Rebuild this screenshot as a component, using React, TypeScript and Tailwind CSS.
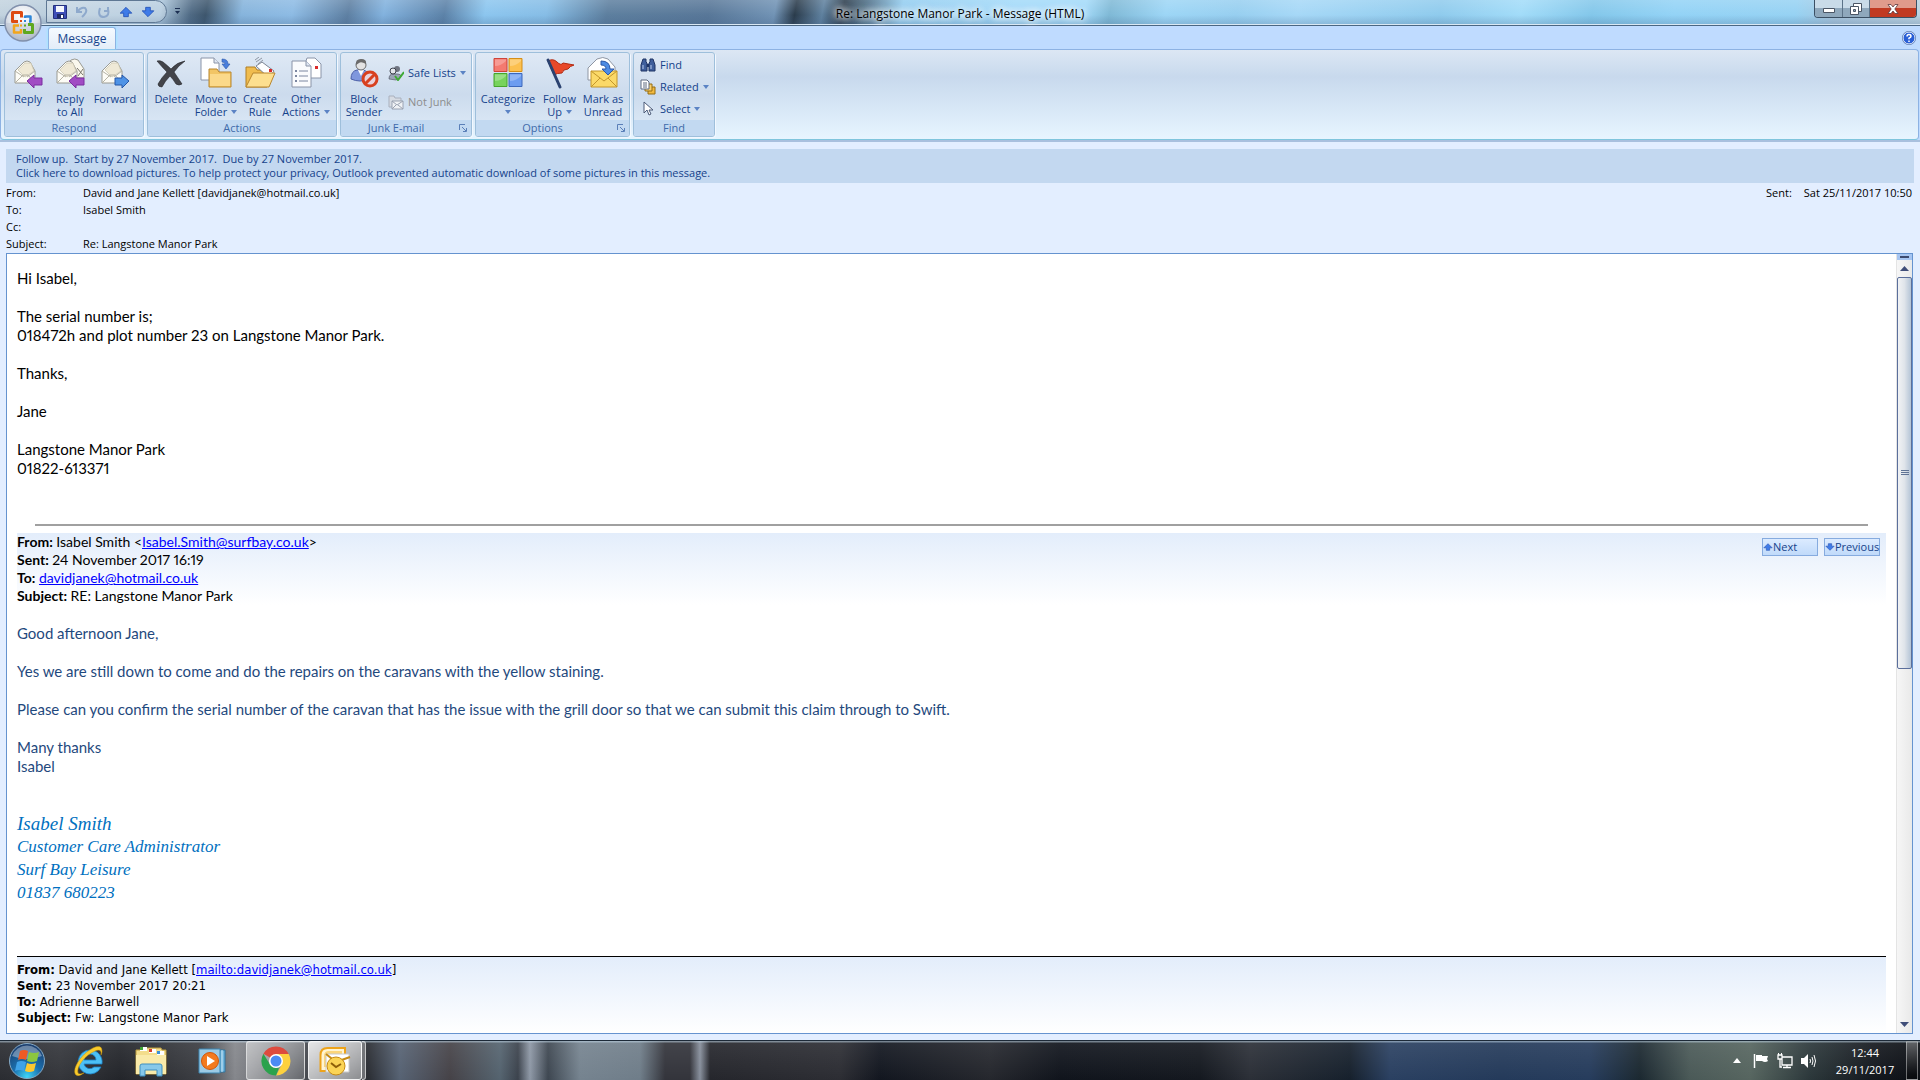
import type { ReactNode } from "react";

const Caret = () => (
  <svg width="6" height="4" viewBox="0 0 6 4" className="inline-block shrink-0" aria-hidden="true">
    <path d="M0 0h6L3 4z" fill="#5b83c4" />
  </svg>
);

const Envelope = () => (
  <>
    <path d="M3 14 12 5q3-2 6 0l5 9v12H3z" fill="#fdfcf6" stroke="#9a9a92" />
    <path d="M6 13 13 6h6l3 8-9 6z" fill="#efe9d6" stroke="#c9c3ae" strokeWidth=".7" />
    <path d="M3 26 11 18h5l7 8M3 14l9 6M23 14l-8 6" fill="none" stroke="#b5b2a4" />
  </>
);

const PurpleArrow = () => (
  <path d="M15 24 22 18v3h8v7h-8v3z" fill="#a14cc4" stroke="#7b2fa0" />
);

const ReplyIcon = () => (
  <svg width="32" height="32" viewBox="0 0 32 32" aria-hidden="true">
    <Envelope />
    <PurpleArrow />
  </svg>
);

const ReplyAllIcon = () => (
  <svg width="32" height="32" viewBox="0 0 32 32" aria-hidden="true">
    <path d="M11 11 17 3q4-2 7 0l6 9v9H11z" fill="#faf8ee" stroke="#9a9a92" />
    <path d="m23 11 6 7M29 12l-5 7" stroke="#77746a" />
    <Envelope />
    <PurpleArrow />
  </svg>
);

const ForwardIcon = () => (
  <svg width="32" height="32" viewBox="0 0 32 32" aria-hidden="true">
    <Envelope />
    <path d="m30 24-7-6v3h-7v7h7v3z" fill="#4f93e6" stroke="#2457a8" />
  </svg>
);

const DeleteIcon = () => (
  <svg width="32" height="32" viewBox="0 0 32 32" aria-hidden="true">
    <path d="M2 4q3-1 6 1 5 4 8 7Q22 5 30 4q-7 5-11 11 4 6 8 12-3 2-6 0-3-5-6-8-5 5-8 11-4 0-4-3 4-7 9-12Q7 10 2 4z" fill="#43444a" stroke="#24252a" strokeWidth=".6" />
  </svg>
);

const MoveIcon = () => (
  <svg width="32" height="32" viewBox="0 0 32 32" aria-hidden="true">
    <path d="M1 1h13l5 5v17H1z" fill="#fff" stroke="#8a94a8" />
    <path d="M14 1v5h5" fill="#dfe6f2" stroke="#8a94a8" />
    <path d="M9 12h8l2 3h12v15H9z" fill="#f2c565" stroke="#b8862f" />
    <path d="M10 17h20v12H10z" fill="#fbd98a" />
    <path d="M22 2q6 0 6 5h2l-4 5-4-5h3q0-2-3-2z" fill="#4a7fdc" stroke="#2b57a8" strokeWidth=".6" />
  </svg>
);

const RuleIcon = () => (
  <svg width="32" height="32" viewBox="0 0 32 32" aria-hidden="true">
    <path d="M2 10h9l2 3h10v17H2z" fill="#f0bc4e" stroke="#b07f25" />
    <path d="m12 9 6-4 12 9-5 7z" fill="#fff" stroke="#7d8594" />
    <path d="m11 3 4-3M12 5l6-4M14 7l5-4" stroke="#8f96a3" />
    <path d="M25 12h3v3h-3z" fill="#d92b2b" />
    <path d="M2 30 9 16h22l-6 14z" fill="#fddf8f" stroke="#b8862f" />
  </svg>
);

const OtherIcon = () => (
  <svg width="32" height="32" viewBox="0 0 32 32" aria-hidden="true">
    <path d="M15 7 17 1h8l6 6v14H15z" fill="#fff" stroke="#8a94a8" />
    <path d="M25 9h3v3h-3z" fill="#d92b2b" />
    <path d="M2 4h14l5 5v21H2z" fill="#fafbfd" stroke="#8a94a8" />
    <path d="M16 4v5h5" fill="#dfe6f2" stroke="#8a94a8" />
    <path d="M9 14h9M9 19h9M9 24h9" stroke="#7b86a0" />
    <path d="M5 13h2v2H5zM5 18h2v2H5zM5 23h2v2H5z" fill="#7b86a0" />
  </svg>
);

const BlockIcon = () => (
  <svg width="32" height="32" viewBox="0 0 32 32" aria-hidden="true">
    <path d="M3 22q0-8 6-9h6q6 1 6 9-9 4-18 0z" fill="#7f97dd" stroke="#4c5fa8" />
    <path d="m10 13 3 6 3-6z" fill="#fff" />
    <circle cx="13" cy="8" r="5" fill="#e3e3e3" stroke="#6b6b6b" />
    <path d="M8 8q-1-6 5-6t5 5q-5-3-7-1z" fill="#6b6b6b" />
    <circle cx="22" cy="22" r="7" fill="#e9d2dc" stroke="#d8401f" strokeWidth="3" />
    <path d="m17 27 10-10" stroke="#d8401f" strokeWidth="3" />
  </svg>
);

const SafeIcon = () => (
  <svg width="16" height="16" viewBox="0 0 16 16" aria-hidden="true">
    <circle cx="9" cy="4" r="3" fill="#6f7480" />
    <path d="M1 14q0-5 4-5h5q3 0 3 3l-5 3z" fill="#9aa3b5" stroke="#474c58" strokeWidth=".6" />
    <circle cx="5" cy="6" r="3" fill="#e3e6ec" stroke="#3d414b" />
    <path d="m7 11 3 4 6-8" fill="none" stroke="#3faa35" strokeWidth="2" />
  </svg>
);

const NotJunkIcon = () => (
  <svg width="16" height="16" viewBox="0 0 16 16" aria-hidden="true">
    <path d="M1 2h5l1 2h6v9H1z" fill="#d6dbe3" stroke="#a9b0bd" />
    <path d="M4 7h11v8H4z" fill="#f0f2f5" stroke="#9aa2b1" />
    <path d="m4 7 5 4 6-4M4 15l4-4M15 15l-5-4" fill="none" stroke="#9aa2b1" />
  </svg>
);

const CategorizeIcon = () => (
  <svg width="32" height="32" viewBox="0 0 32 32" aria-hidden="true">
    <path d="M2 1.500h13v13H2z" fill="#f47a70" stroke="#cf4339" />
    <path d="M17 1.500h13v13H17z" fill="#fcc04f" stroke="#d58e17" />
    <path d="M2 16.500h13v13H2z" fill="#77d35c" stroke="#46a52c" />
    <path d="M17 16.500h13v13H17z" fill="#6c9cf0" stroke="#3c68bd" />
    <path d="M3 9q6 0 11-5V2.500H3zM18 9q6 0 11-5V2.500H18zM3 24q6 0 11-5v-1.500H3zM18 24q6 0 11-5v-1.500H18z" fill="#fff" opacity=".25" />
  </svg>
);

const FlagIcon = () => (
  <svg width="32" height="32" viewBox="0 0 32 32" aria-hidden="true">
    <path d="M4 4q5-3 9 1t6 1l11 2q-4 1-6 4-5 0-6 4-5 0-8 2z" fill="#e8492a" stroke="#b32a12" />
    <path d="m4 3 12 27" stroke="#2b4270" strokeWidth="3" strokeLinecap="round" />
  </svg>
);

const MarkIcon = () => (
  <svg width="32" height="32" viewBox="0 0 32 32" aria-hidden="true">
    <path d="M1 11 10 2q6-3 11 0l7 8v13H1z" fill="#fff" stroke="#8f96a3" />
    <path d="M4 14h26v16H4z" fill="#fbd968" stroke="#c2952b" />
    <path d="m4 14 13 10 13-10M4 30l9-9M30 30l-9-9" fill="none" stroke="#c2952b" />
    <path d="M14 4q9 0 9 8h4l-6 6-6-6h4q0-4-5-4z" fill="#4d8be3" stroke="#2b57a8" />
  </svg>
);

const FindIcon = () => (
  <svg width="16" height="16" viewBox="0 0 16 16" aria-hidden="true">
    <path d="M3 2h3v3l1 1v8H1V8zM10 2h3l2 6v6H9V6l1-1z" fill="#3f5f9c" stroke="#1f3464" />
    <path d="M7 7h2v3H7z" fill="#1f3464" />
    <path d="M3 8v4M11 8v4" stroke="#b9cdf0" />
  </svg>
);

const RelatedIcon = () => (
  <svg width="16" height="16" viewBox="0 0 16 16" aria-hidden="true">
    <path d="M8 8h7v7H8z" fill="#f2b93f" stroke="#946c12" />
    <path d="M5 5h7v7H5z" fill="#f9cf6d" stroke="#946c12" />
    <path d="M1 1h6l2 2v7H1z" fill="#fff" stroke="#5f6a80" />
    <path d="M3 4h4M3 6h4M3 8h4" stroke="#5f6a80" />
  </svg>
);

const SelectIcon = () => (
  <svg width="16" height="16" viewBox="0 0 16 16" aria-hidden="true">
    <path d="M4 1v11l3-3 2 5 2-1-2-4h4z" fill="#fff" stroke="#4b5a78" />
  </svg>
);

type BigButtonProps = {
  icon: ReactNode;
  lines: string[];
  className: string;
  caret?: boolean;
};

const BigButton = ({ icon, lines, className, caret }: BigButtonProps) => (
  <button className={`flex shrink-0 flex-col items-center pt-1 text-[11px] leading-[13px] whitespace-nowrap ${className}`}>
    {icon}
    <span className="mt-[3px]">{lines[0]}</span>
    {(lines[1] || caret) && (
      <span className="flex h-[13px] items-center gap-1">
        {lines[1]}
        {caret && <Caret />}
      </span>
    )}
  </button>
);

type SmallButtonProps = { icon: ReactNode; label: string; caret?: boolean; disabled?: boolean };

const SmallButton = ({ icon, label, caret, disabled }: SmallButtonProps) => (
  <button disabled={disabled} className="flex items-center gap-1 text-[11px] leading-4 whitespace-nowrap disabled:text-[#8d8d8d]">
    {icon}
    {label}
    {caret && <Caret />}
  </button>
);

type GroupProps = { title: string; className: string; launcher?: boolean; children: ReactNode };

const Group = ({ title, className, launcher, children }: GroupProps) => (
  <section className={`flex shrink-0 flex-col overflow-hidden rounded-[3px] border border-[#9ebfdb] bg-linear-to-b from-[#dfe9f5] via-[#ccdbed] to-[#dfecf8] shadow-[1px_1px_0_#f2f8ff] ${className}`}>
    <div className="flex flex-1">{children}</div>
    <div className="flex h-4 items-center bg-[#c2d9f1] text-[#3e6aaa]">
      <h2 className="flex-1 text-center text-[11px] leading-[18px]">{title}</h2>
      {launcher && (
        <button aria-label={`${title} settings`} className="flex w-5 justify-end pr-1">
          <svg width="8" height="8" viewBox="0 0 8 8">
            <path d="M.5 6V.5H6M3 3l4 4M7.500 4v3.500H4" fill="none" stroke="#5a7fb8" />
          </svg>
        </button>
      )}
    </div>
  </section>
);

const OfficeOrb = () => (
  <button aria-label="Office menu" className="absolute left-[3px] top-[3px]">
    <svg width="40" height="40" viewBox="0 0 40 40">
      <defs>
        <radialGradient id="orb" cx=".5" cy=".3" r=".7">
          <stop offset="0" stopColor="#fff" />
          <stop offset=".6" stopColor="#dde2ea" />
          <stop offset="1" stopColor="#a9b2c2" />
        </radialGradient>
      </defs>
      <circle cx="20" cy="20" r="18" fill="url(#orb)" stroke="#8190ac" strokeWidth="1.500" />
      <path d="M3 20h34a17 17 0 0 1-34 0z" fill="#b9c1d0" opacity=".45" />
      <g fill="none" strokeLinejoin="round">
        <path d="M15 18.500H9.500v-9h9v5" stroke="#dd4a12" strokeWidth="3" />
        <path d="M22 15v-1.500h5.500v5H26" stroke="#2f86d8" strokeWidth="2.500" />
        <path d="M16 22.500h-5v7h7V26" stroke="#f2a51c" strokeWidth="2.500" />
        <path d="M25 21.500h4.500v8h-8V26" stroke="#5fa81f" strokeWidth="3" />
      </g>
      <path d="M17 17h2v2h-2z" fill="#dd4a12" />
      <path d="M21 17h2v2h-2z" fill="#2f86d8" />
      <path d="M17 21.500h2v2h-2z" fill="#f2a51c" />
      <path d="M21 21.500h2v2h-2z" fill="#5fa81f" />
    </svg>
  </button>
);

const BlueArrow = ({ d }: { d: string }) => (
  <svg width="14" height="14" viewBox="0 0 12 12">
    <path d={d} fill="#3f7be8" stroke="#2250b4" strokeWidth=".7" />
  </svg>
);

const UP = "M6 2l5 5H8v3H4V7H1z";
const DOWN = "M6 10 1 5h3V2h4v3h3z";

const TitleBar = () => (
  <header className="relative grid h-[26px] shrink-0 grid-cols-[1fr_auto_1fr] items-start border-b border-[#4b6783] bg-[linear-gradient(180deg,rgba(255,255,255,.15),rgba(255,255,255,0)_60%,rgba(60,90,130,.25)),linear-gradient(100deg,#c3d3df_0px,#a9c4da_160px,#4f6a84_190px,#3d566d_205px,#86b4dc_240px,#8dbbe4_290px,#5e80a3_345px,#82b2de_380px,#5c82a8_440px,#8cc6ef_480px,#86bde6_540px,#5d7f9f_600px,#587798_700px,#7193b5_765px,#2a3b4b_785px,#5f819f_812px,#2a3b4b_832px,#4d6f88_855px,#93cdf0_890px,#a3daf9_1000px,#a3daf9_1070px,#7fb9d6_1095px,#9dd6f6_1150px,#97cff0_1220px,#a6d8f7_1280px,#8fcbed_1420px,#a2dcf9_1500px,#83c7ea_1570px,#93d3f6_1650px,#96d2f3_1770px,#a9c6dd_1810px,#bcd4e2_1900px)] shadow-[inset_0_-1px_0_#d9e8f4]">
    <div className="flex items-start">
      <div className="ml-[46px] flex h-[23px] w-[121px] items-center gap-2 rounded-r-full border border-[#5f7894] bg-white/20 pl-1.5">
        <button aria-label="Save">
          <svg width="14" height="14" viewBox="0 0 14 14">
            <path d="M.5.5h13v13H.5z" fill="#3f4fb8" stroke="#23307e" />
            <path d="M3 1h8v6H3z" fill="#f4f6fd" />
            <path d="M4 9h7v4H4z" fill="#1f2a66" />
            <path d="M8 10h2v3H8z" fill="#fff" />
          </svg>
        </button>
        <button aria-label="Undo" disabled>
          <svg width="14" height="14" viewBox="0 0 14 14">
            <path d="M2 2v5h5M3 6q3-4 7-3 3 3-1 7l-2 2" fill="none" stroke="#8ea9cc" strokeWidth="2" />
          </svg>
        </button>
        <button aria-label="Redo" disabled>
          <svg width="14" height="14" viewBox="0 0 14 14">
            <path d="M3 3q-3 9 4 9 6-1 4-8M7 6h4V2" fill="none" stroke="#8ea9cc" strokeWidth="2" />
          </svg>
        </button>
        <button aria-label="Previous item">
          <BlueArrow d={UP} />
        </button>
        <button aria-label="Next item">
          <BlueArrow d={DOWN} />
        </button>
      </div>
      <button aria-label="Customize toolbar" className="ml-2 mt-2">
        <svg width="5" height="7" viewBox="0 0 5 7">
          <path d="M0 0h5v1H0zM0 3h5L2.500 6z" fill="#1c2f52" />
        </svg>
      </button>
    </div>
    <h1 className="text-[12px] leading-[27px] text-black [text-shadow:0_0_6px_#fff,0_0_8px_#fff,0_0_10px_#fff]">
      Re: Langstone Manor Park - Message (HTML)
    </h1>
    <div className="mr-[3px] flex h-[18px] justify-self-end overflow-hidden rounded-b-[4px] border border-t-0 border-[#3b4f63]">
      <button aria-label="Minimize" className="flex w-7 items-center justify-center border-r border-[#5c7388] bg-linear-to-b from-[#c9dbe8] from-50% to-[#8fa8bc] to-50%">
        <svg width="12" height="5" viewBox="0 0 12 5" className="mt-1">
          <path d="M.5.5h11v4H.5z" fill="#fff" stroke="#4b5665" />
        </svg>
      </button>
      <button aria-label="Restore" className="flex w-[27px] items-center justify-center border-r border-[#5c7388] bg-linear-to-b from-[#c9dbe8] from-50% to-[#8fa8bc] to-50%">
        <svg width="12" height="12" viewBox="0 0 12 12">
          <path d="M3.500.5h8v8h-8z" fill="#fff" stroke="#4b5665" />
          <path d="M.5 3.500h8v8h-8z" fill="#fff" stroke="#4b5665" />
          <path d="M3.500 6.500h2v2h-2z" fill="#8fa8bc" stroke="#4b5665" />
        </svg>
      </button>
      <button aria-label="Close" className="flex w-[46px] items-center justify-center bg-linear-to-b from-[#e09b8c] from-45% to-[#c13a22] to-50%">
        <svg width="12" height="10" viewBox="0 0 12 10">
          <path d="M1 .5h3l2 2.500L8 .5h3L7.800 5 11 9.500H8L6 7 4 9.500H1L4.200 5z" fill="#fff" stroke="#5d3a3f" strokeWidth=".8" />
        </svg>
      </button>
    </div>
    <OfficeOrb />
  </header>
);

const Ribbon = () => (
  <div className="shrink-0 bg-[#bfdbff] text-[#15428b]">
    <div className="flex h-[23px] items-end justify-between pl-12 pr-1">
      <button className="h-[22px] w-[68px] rounded-t-[3px] border border-b-0 border-[#8db2e3] bg-linear-to-b from-[#f5faff] to-[#e3edf8] text-[12px] shadow-[0_0_3px_#8ff0ff]">
        Message
      </button>
      <button aria-label="Help" className="mb-1">
        <svg width="14" height="14" viewBox="0 0 14 14">
          <circle cx="7" cy="7" r="6" fill="#2a5fd6" stroke="#e6effc" />
          <circle cx="7" cy="7" r="6.700" fill="none" stroke="#3a5794" strokeWidth=".6" />
          <path d="M5 5.500q0-2 2-2t2 1.700q0 1-2 2v1M7 9.500v1.500" fill="none" stroke="#fff" strokeWidth="1.500" />
        </svg>
      </button>
    </div>
    <div className="mr-px flex h-[91px] gap-[3px] rounded-[4px] border border-[#8db2e3] border-b-[#7fc5dd] bg-linear-to-b from-[#dce7f4] via-[#c8d9ed] via-30% to-[#e7f5ff] px-[3px] py-0.5">
      <Group title="Respond" className="w-[140px]">
        <BigButton icon={<ReplyIcon />} lines={["Reply"]} className="ml-[3px] w-10" />
        <BigButton icon={<ReplyAllIcon />} lines={["Reply", "to All"]} className="w-11" />
        <BigButton icon={<ForwardIcon />} lines={["Forward"]} className="w-[46px]" />
      </Group>
      <Group title="Actions" className="w-[190px]">
        <BigButton icon={<DeleteIcon />} lines={["Delete"]} className="ml-0.5 w-[42px]" />
        <BigButton icon={<MoveIcon />} lines={["Move to", "Folder"]} className="w-12" caret />
        <BigButton icon={<RuleIcon />} lines={["Create", "Rule"]} className="w-10" />
        <BigButton icon={<OtherIcon />} lines={["Other", "Actions"]} className="w-[52px]" caret />
      </Group>
      <Group title="Junk E-mail" className="w-[132px]" launcher>
        <BigButton icon={<BlockIcon />} lines={["Block", "Sender"]} className="w-[46px]" />
        <div className="flex flex-col gap-[13px] pl-px pt-3">
          <SmallButton icon={<SafeIcon />} label="Safe Lists" caret />
          <SmallButton icon={<NotJunkIcon />} label="Not Junk" disabled />
        </div>
      </Group>
      <Group title="Options" className="w-[155px]" launcher>
        <BigButton icon={<CategorizeIcon />} lines={["Categorize", ""]} className="w-16" caret />
        <BigButton icon={<FlagIcon />} lines={["Follow", "Up"]} className="w-[39px]" caret />
        <BigButton icon={<MarkIcon />} lines={["Mark as", "Unread"]} className="w-12" />
      </Group>
      <Group title="Find" className="w-[82px]">
        <div className="flex flex-col gap-1.5 pl-1.5 pt-1">
          <SmallButton icon={<FindIcon />} label="Find" />
          <SmallButton icon={<RelatedIcon />} label="Related" caret />
          <SmallButton icon={<SelectIcon />} label="Select" caret />
        </div>
      </Group>
    </div>
    <div className="h-0.5 bg-[#a9c0de]" />
  </div>
);

const Field = ({ label, children }: { label: string; children?: ReactNode }) => (
  <div className="flex">
    <dt className="w-[77px]">{label}</dt>
    <dd>{children}</dd>
  </div>
);

const MessageHeader = () => (
  <div className="shrink-0 px-1.5 pt-[7px] text-[11px]">
    <button className="block w-full bg-[#c3d8f0] px-2.5 py-[3px] text-left leading-[14px] whitespace-pre text-[#15428b]">
      {"Follow up.  Start by 27 November 2017.  Due by 27 November 2017.\nClick here to download pictures. To help protect your privacy, Outlook prevented automatic download of some pictures in this message."}
    </button>
    <div className="flex justify-between pb-px pt-px leading-[17px] text-black">
      <dl>
        <Field label="From:">David and Jane Kellett [davidjanek@hotmail.co.uk]</Field>
        <Field label="To:">Isabel Smith</Field>
        <Field label="Cc:" />
        <Field label="Subject:">Re: Langstone Manor Park</Field>
      </dl>
      <p className="flex gap-3 pr-0.5">
        <span>Sent:</span>
        <span>Sat 25/11/2017 10:50</span>
      </p>
    </div>
  </div>
);

const NavButton = ({ d, label }: { d: string; label: string }) => (
  <button className="flex h-[18px] w-14 items-center border border-[#86abdf] bg-linear-to-b from-[#dcebff] to-[#c0dafa] text-[11px] leading-4 text-[#15428b]">
    <svg width="10" height="10" viewBox="0 0 12 12" className="shrink-0">
      <path d={d} fill="#3f7be8" stroke="#2250b4" strokeWidth=".7" />
    </svg>
    {label}
  </button>
);

const MessageBody = () => (
  <article className="min-w-0 flex-1 overflow-hidden px-2.5 pt-[15px] font-['Lato',sans-serif] text-[15px] leading-[19px] text-black proportional-nums">
    <div className="whitespace-pre-line">
      {"Hi Isabel,\n\nThe serial number is;\n018472h and plot number 23 on Langstone Manor Park.\n\nThanks,\n\nJane\n\nLangstone Manor Park\n01822-613371"}
    </div>
    <hr className="mx-[18px] mt-[46px] border-t-2 border-[#a0a0a0]" />

    <div className="mt-[7px] flex items-start justify-between bg-linear-to-b from-[#e3edfb] to-white text-[14px] leading-[18px]">
      <div>
        <p><b>From:</b> Isabel Smith &lt;<a href="mailto:Isabel.Smith@surfbay.co.uk" className="text-[#0000ff] underline">Isabel.Smith@surfbay.co.uk</a>&gt;</p>
        <p><b>Sent:</b> 24 November 2017 16:19</p>
        <p><b>To:</b> <a href="mailto:davidjanek@hotmail.co.uk" className="text-[#0000ff] underline">davidjanek@hotmail.co.uk</a></p>
        <p><b>Subject:</b> RE: Langstone Manor Park</p>
      </div>
      <div className="mr-1.5 mt-[5px] flex gap-1.5 font-['Open_Sans',sans-serif]">
        <NavButton d={UP} label="Next" />
        <NavButton d={DOWN} label="Previous" />
      </div>
    </div>

    <div className="mt-[19px] whitespace-pre-line text-[#1f497d]">
      {"Good afternoon Jane,\n\nYes we are still down to come and do the repairs on the caravans with the yellow staining.\n\nPlease can you confirm the serial number of the caravan that has the issue with the grill door so that we can submit this claim through to Swift.\n\nMany thanks\nIsabel"}
    </div>

    <div className="mt-9 font-['Monotype_Corsiva','Liberation_Serif',serif] text-[17px] leading-[23px] italic text-[#0070c0]">
      <p className="text-[19px]">Isabel Smith</p>
      <p>Customer Care Administrator</p>
      <p>Surf Bay Leisure</p>
      <p>01837 680223</p>
    </div>

    <div className="mt-[52px] border-t border-black bg-linear-to-b from-[#e3edfb] to-white pb-2 pt-[5px] font-['DejaVu_Sans_Condensed','DejaVu_Sans',sans-serif] text-[13px] leading-4">
      <p><b>From:</b> David and Jane Kellett [<a href="mailto:davidjanek@hotmail.co.uk" className="text-[#0000ff] underline">mailto:davidjanek@hotmail.co.uk</a>]</p>
      <p><b>Sent:</b> 23 November 2017 20:21</p>
      <p><b>To:</b> Adrienne Barwell</p>
      <p><b>Subject:</b> Fw: Langstone Manor Park</p>
    </div>
  </article>
);

const Scrollbar = () => (
  <div className="flex w-4 shrink-0 flex-col border-l border-[#e4e4e4] bg-linear-to-r from-[#f6f6f6] to-[#e9e9e9]">
    <div className="flex h-1.5 shrink-0 items-center justify-center bg-[#a6c5f2]">
      <div className="h-0.5 w-[9px] bg-[#3c4a70]" />
    </div>
    <button aria-label="Scroll up" className="flex h-[17px] shrink-0 items-center justify-center">
      <svg width="9" height="5" viewBox="0 0 9 5"><path d="M4.500 0 9 5H0z" fill="#3f4d78" /></svg>
    </button>
    <div className="min-h-0 flex-1">
      <div className="flex h-[53%] flex-col items-center justify-center gap-px rounded-[2px] border border-[#5b6f9c] bg-linear-to-r from-[#f1f3f5] via-[#dfe4ea] to-[#b4c4d6]">
        <div className="h-px w-2 bg-[#5f7395]" />
        <div className="h-px w-2 bg-[#5f7395]" />
        <div className="h-px w-2 bg-[#5f7395]" />
      </div>
    </div>
    <button aria-label="Scroll down" className="flex h-[17px] shrink-0 items-center justify-center">
      <svg width="9" height="5" viewBox="0 0 9 5"><path d="M0 0h9L4.500 5z" fill="#3f4d78" /></svg>
    </button>
  </div>
);

const StartOrb = () => (
  <svg width="38" height="38" viewBox="0 0 38 38">
    <defs>
      <radialGradient id="start" cx=".5" cy=".95" r=".9">
        <stop offset="0" stopColor="#3fd6f7" />
        <stop offset=".45" stopColor="#1a6fae" />
        <stop offset="1" stopColor="#1b3f70" />
      </radialGradient>
    </defs>
    <circle cx="19" cy="19" r="17.500" fill="url(#start)" stroke="#86a9c4" />
    <path d="M4 14a16 16 0 0 1 30 0q-15 6-30 0z" fill="#fff" opacity=".35" />
    <path d="M12 9q4-2 8 0l-2 9q-4-2-8 0z" fill="#ee5a24" />
    <path d="M21 10q5 2 10 0l-2 9q-5 2-10 0z" fill="#8cc63f" />
    <path d="M9 20q4-2 9 0l-2 9q-5-2-9 0z" fill="#3fa2e8" />
    <path d="M19 21q4 2 9 0l-2 8q-5 2-9 0z" fill="#fdc82f" />
  </svg>
);

const IeIcon = () => (
  <svg width="32" height="32" viewBox="0 0 32 32">
    <path d="M17 5a12 12 0 1 0 11 17h-7a6 6 0 0 1-10-3h18A12 12 0 0 0 17 5zm-6 10a6 6 0 0 1 12 0z" fill="#4cc0f5" stroke="#1c82c8" strokeWidth=".8" />
    <path d="M3 30C-2 25 8 9 20 3q9-4 9 3 0 2-1 4 1-7-6-4C12 10 3 22 5 28q1 2 6 0-5 4-8 2z" fill="#f9cb2c" stroke="#c8950b" strokeWidth=".5" />
  </svg>
);

const ExplorerIcon = () => (
  <svg width="34" height="32" viewBox="0 0 34 32">
    <path d="M2 5h9l2-2h14l1 2h4v24H2z" fill="#f3dd8c" stroke="#b99a3e" />
    <path d="M6 2h7v4H6zM15 4h7v4h-7zM23 6h7v4h-7z" fill="#fff" />
    <path d="M6 2h3v3H6z" fill="#3fa535" />
    <path d="M15 4h3v3h-3z" fill="#d8402a" />
    <path d="M23 6h3v3h-3z" fill="#3a8fd8" />
    <path d="M2 10h30v19H2z" fill="#f9eaa9" />
    <path d="M6 31V21q0-2 2-2h18q2 0 2 2v10h-5v-6H11v6z" fill="#86c8ea" stroke="#3f8fc0" />
  </svg>
);

const PlayerIcon = () => (
  <svg width="28" height="26" viewBox="0 0 28 26">
    <path d="M6 2h21v22H6z" fill="#6fb4dd" stroke="#2e759f" />
    <path d="M24 2v22" stroke="#cde8f6" />
    <path d="M1 1h21v24H1z" fill="#9ccbe6" stroke="#3d85b0" />
    <circle cx="12" cy="13" r="8.500" fill="#f37a1f" stroke="#d2570a" />
    <path d="m9 8 8 5-8 5z" fill="#fff" />
  </svg>
);

const ChromeIcon = () => (
  <svg width="30" height="30" viewBox="0 0 30 30">
    <path d="M15 15 2.440 7.750A14.500 14.500 0 0 1 27.560 7.750z" fill="#dd4b3e" />
    <path d="M15 8h12.700A14.500 14.500 0 0 1 15 29.500L21 18z" fill="#fdd13e" />
    <path d="M2.440 7.750 9 18.500q2 3.500 6 3.500l3-.5L15 29.500A14.500 14.500 0 0 1 2.440 7.750z" fill="#2ba24c" />
    <circle cx="15" cy="15" r="7" fill="#fff" />
    <circle cx="15" cy="15" r="5.500" fill="#4a8af4" />
  </svg>
);

const OutlookIcon = () => (
  <svg width="32" height="30" viewBox="0 0 32 30">
    <path d="M1.500 25V9q0-7 7-7H26v23z" fill="#fff4d2" stroke="#eda31b" strokeWidth="2" />
    <path d="M5 21V10q0-5 5-5h13v16z" fill="#fbd57a" />
    <path d="M7 8h23v18H7z" fill="#fff" stroke="#c9c9c9" />
    <path d="m7 8 10 8 14-5" fill="none" stroke="#c58a13" strokeWidth="2" />
    <circle cx="17" cy="20" r="9" fill="#fbd455" stroke="#c58a13" />
    <path d="m12 17 5 4 5-3" fill="none" stroke="#8e5f08" strokeWidth="2" />
  </svg>
);

const Taskbar = () => (
  <footer className="flex h-10 shrink-0 items-stretch border-t border-[#1d2a38] bg-[linear-gradient(180deg,rgba(200,220,235,.55)_0px,rgba(200,220,235,.55)_1px,rgba(255,255,255,.08)_2px,rgba(255,255,255,0)),linear-gradient(90deg,#2a2c31_0px,#34363b_60px,#23252a_120px,#3b3d42_200px,#85878c_235px,#43464c_310px,#2a2d33_368px,#566273_400px,#454247_450px,#54636f_500px,#3b424c_518px,#8e98a6_530px,#3d4650_548px,#75838f_580px,#6f7d89_640px,#33343b_665px,#33343b_690px,#878f9c_700px,#25262c_710px,#2c2d33_840px,#12161f_880px,#25272d_990px,#10141c_1060px,#14181f_1200px,#2b2f37_1250px,#16202c_1350px,#2a4061_1390px,#243a5a_1500px,#263c5c_1590px,#1b2830_1640px,#4a5957_1690px,#56655f_1750px,#2b373a_1810px,#15191f_1870px,#0b0e13_1920px)]">
    <nav className="flex flex-1 items-center">
      <button aria-label="Start" className="ml-2"><StartOrb /></button>
      <button aria-label="Internet Explorer" className="ml-[27px]"><IeIcon /></button>
      <button aria-label="Windows Explorer" className="ml-[29px]"><ExplorerIcon /></button>
      <button aria-label="Media Player" className="ml-[30px]"><PlayerIcon /></button>
      <button aria-label="Chrome" className="ml-5 flex h-[39px] w-[59px] items-center justify-center rounded-[3px] border border-white/60 bg-linear-to-br from-white/50 to-white/15">
        <ChromeIcon />
      </button>
      <button aria-label="Outlook" className="ml-[3px] flex h-[39px] w-[54px] items-center justify-center rounded-[3px] border border-white/80 bg-linear-to-br from-white/85 to-white/45">
        <OutlookIcon />
      </button>
      <div className="h-[39px] w-1 rounded-r-[3px] border border-l-0 border-white/60 bg-white/30" />
    </nav>
    <div className="flex items-center gap-2 text-white">
      <button aria-label="Show hidden icons" className="flex w-4 justify-center">
        <svg width="8" height="5" viewBox="0 0 8 5"><path d="M4 0 8 5H0z" fill="#fff" /></svg>
      </button>
      <button aria-label="Action center">
        <svg width="16" height="16" viewBox="0 0 16 16">
          <path d="M1.500 1v14" stroke="#fff" strokeWidth="1.500" />
          <path d="M3 2h6v1h6l-1 3 1 2q-3 2-6 0H3z" fill="#fff" />
        </svg>
      </button>
      <button aria-label="Network">
        <svg width="16" height="16" viewBox="0 0 16 16">
          <path d="M5 4h10v8H5zM10 12v2M6 14.500h8M1 2h4v4H1zM3 6v8h2" fill="none" stroke="#fff" strokeWidth="1.300" />
          <path d="M1.500 0v2M4.500 0v2" stroke="#fff" />
        </svg>
      </button>
      <button aria-label="Volume">
        <svg width="16" height="16" viewBox="0 0 16 16">
          <path d="M0 5h3l4-4v14l-4-4H0z" fill="#fff" />
          <path d="M9 6q1 2 0 4M11 4q2 4 0 8M13 2q3 6 0 12" fill="none" stroke="#fff" />
        </svg>
      </button>
      <time className="ml-1 w-[72px] text-center text-[11px] leading-[17px]">
        12:44
        <br />
        29/11/2017
      </time>
    </div>
    <button aria-label="Show desktop" className="ml-[5px] mr-0.5 w-3 border border-white/40 bg-linear-to-b from-white/30 to-black/30" />
  </footer>
);

const App = () => {
  return (
    <div className="flex h-screen flex-col overflow-hidden bg-[#e3eeff] font-['Open_Sans','Noto_Sans',sans-serif]">
      <TitleBar />
      <Ribbon />
      <MessageHeader />
      <main className="mb-1.5 ml-1.5 mr-[7px] flex min-h-0 flex-1 border border-[#6593cf] bg-white">
        <MessageBody />
        <Scrollbar />
      </main>
      <Taskbar />
    </div>
  );
};

export default App;
